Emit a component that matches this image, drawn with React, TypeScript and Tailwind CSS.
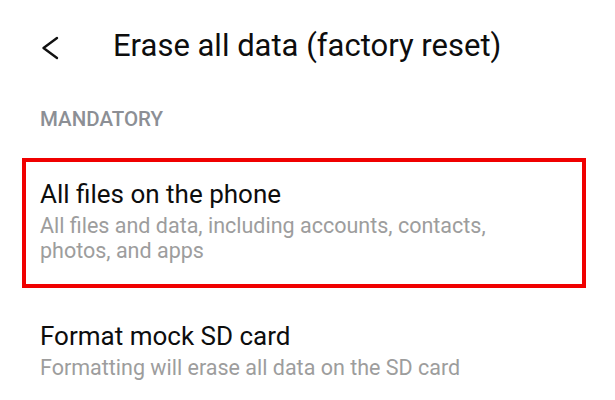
import React, { FC } from "react";

const font = { fontFamily: "Roboto, 'Liberation Sans', sans-serif" };

interface RowProps {
  title: string;
  desc: string;
}

const Row: FC<RowProps> = ({ title, desc }) => {
  return (
    <div className="flex flex-col">
      <span className="text-[26px] leading-[32px] text-[#0d0d0d]">{title}</span>
      <span className="mt-[3px] text-[21.5px] leading-[25px] text-[#9d9d9d] whitespace-pre-line">{desc}</span>
    </div>
  );
};

const App: FC = () => {
  return (
    <div style={font} className="w-[615px] h-[400px] bg-white overflow-hidden">
      {/* header */}
      <div className="flex items-start pt-[28px] pl-[41px]">
        <svg width="18" height="24" viewBox="0 0 18 24" fill="none" className="shrink-0 mt-[8px]">
          <path d="M16 2 L2.5 12 L16 22" stroke="#111" strokeWidth="2.4" strokeLinecap="round" strokeLinejoin="round" />
        </svg>
        <h1 className="ml-[54px] text-[31px] leading-[36px] text-[#0d0d0d]">Erase all data (factory reset)</h1>
      </div>

      <div className="mt-[43px] pl-10 text-[20.5px] leading-[25px] font-medium text-[#8c8f95]">MANDATORY</div>

      <div className="mt-[26px] ml-[22px] mr-[29px] border-4 border-[#f00000] pl-[14px] pt-[16px] pb-[21px]">
        <Row
          title="All files on the phone"
          desc={"All files and data, including accounts, contacts,\nphotos, and apps"}
        />
      </div>

      <div className="mt-[32px] pl-10">
        <Row title="Format mock SD card" desc="Formatting will erase all data on the SD card" />
      </div>
    </div>
  );
};

export default App;
